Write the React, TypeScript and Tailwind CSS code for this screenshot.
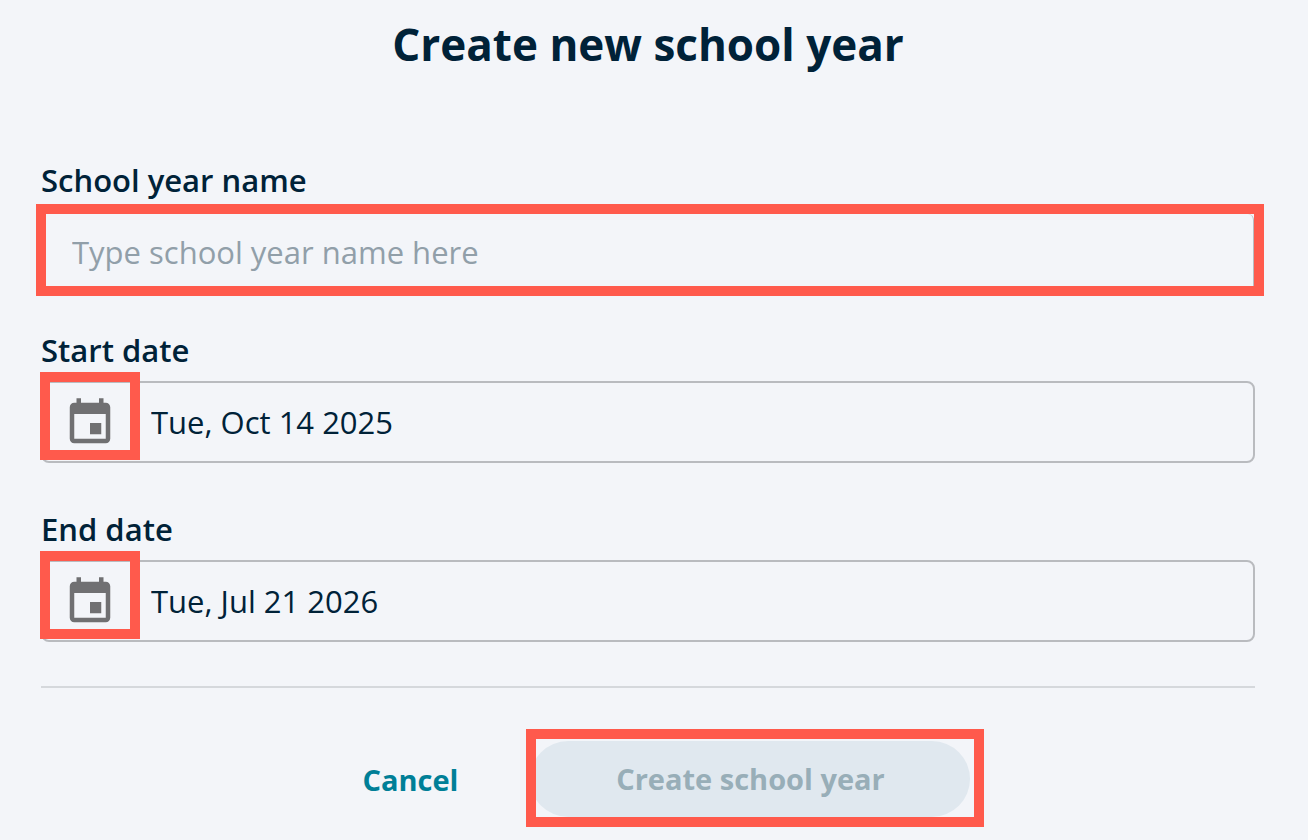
import { useState } from 'react'

function CalendarIcon() {
  return (
    <svg viewBox="0 0 24 24" className="w-[54px] h-[54px] fill-[#707072]" aria-hidden="true">
      <path d="M17 12h-5v5h5v-5zM16 1v2H8V1H6v2H5c-1.11 0-1.99.9-1.99 2L3 19c0 1.1.89 2 2 2h14c1.1 0 2-.9 2-2V5c0-1.1-.9-2-2-2h-1V1h-2zm3 18H5V8h14v11z" />
    </svg>
  )
}

function DateField({ id, label, initial }: { id: string; label: string; initial: string }) {
  const [value, setValue] = useState(initial)

  return (
    <div className="flex flex-col">
      <label htmlFor={id} className="text-[31px] leading-[42px] font-semibold">{label}</label>
      <div className="relative mt-[10px] h-[82px] flex items-center border-2 border-[#b9bbbf] rounded-lg">
        <button
          type="button"
          aria-label={`Pick ${label.toLowerCase()}`}
          className="absolute -left-[3px] -top-[11px] w-[100px] h-[88px] border-10 border-[#ff5a4c] flex items-end justify-center"
        >
          <CalendarIcon />
        </button>
        <input
          id={id}
          type="text"
          value={value}
          onChange={(e) => setValue(e.target.value)}
          className="flex-1 min-w-0 h-full pl-[108px] pr-4 bg-transparent text-[31px] outline-none"
        />
      </div>
    </div>
  )
}

export default function App() {
  const [name, setName] = useState('')

  return (
    <form
      onSubmit={(e) => e.preventDefault()}
      className="min-h-screen bg-[#f3f5f9] text-[#002238] pl-[41px] pr-[53px] pt-[14px] font-['Open_Sans',sans-serif]"
    >
      <h1 className="text-[44px] leading-[60px] font-bold text-center">Create new school year</h1>

      <div className="mt-[85px] flex flex-col">
        <label htmlFor="year-name" className="text-[31px] leading-[42px] font-semibold">School year name</label>
        <div className="mt-[3px] -ml-[5px] -mr-[9px] h-[92px] border-10 border-[#ff5a4c]">
          <input
            id="year-name"
            type="text"
            value={name}
            onChange={(e) => setName(e.target.value)}
            placeholder="Type school year name here"
            className="w-full h-full pt-1 pl-[26px] border-r border-[#b9bbbf] rounded-tr-md bg-transparent text-[31px] outline-none placeholder:text-[#919fa9]"
          />
        </div>
      </div>

      <div className="mt-[33px] flex flex-col gap-[45px]">
        <DateField id="start-date" label="Start date" initial="Tue, Oct 14 2025" />
        <DateField id="end-date" label="End date" initial="Tue, Jul 21 2026" />
      </div>

      <hr className="mt-[44px] border-t-2 border-[#d5d8dc]" />

      <div className="mt-[41px] flex items-center justify-center gap-[17px]">
        <button type="button" className="px-[51px] pt-1 text-[29px] font-bold text-[#007f97]">Cancel</button>
        <div className="w-[458px] h-[98px] border-10 border-[#ff5a4c] flex items-end overflow-hidden">
          <button
            type="submit"
            disabled
            className="-ml-1.5 w-[440px] h-[76px] shrink-0 rounded-full bg-[#e0e8ef] text-[29px] font-bold text-[#98aeb8]"
          >
            Create school year
          </button>
        </div>
      </div>
    </form>
  )
}
